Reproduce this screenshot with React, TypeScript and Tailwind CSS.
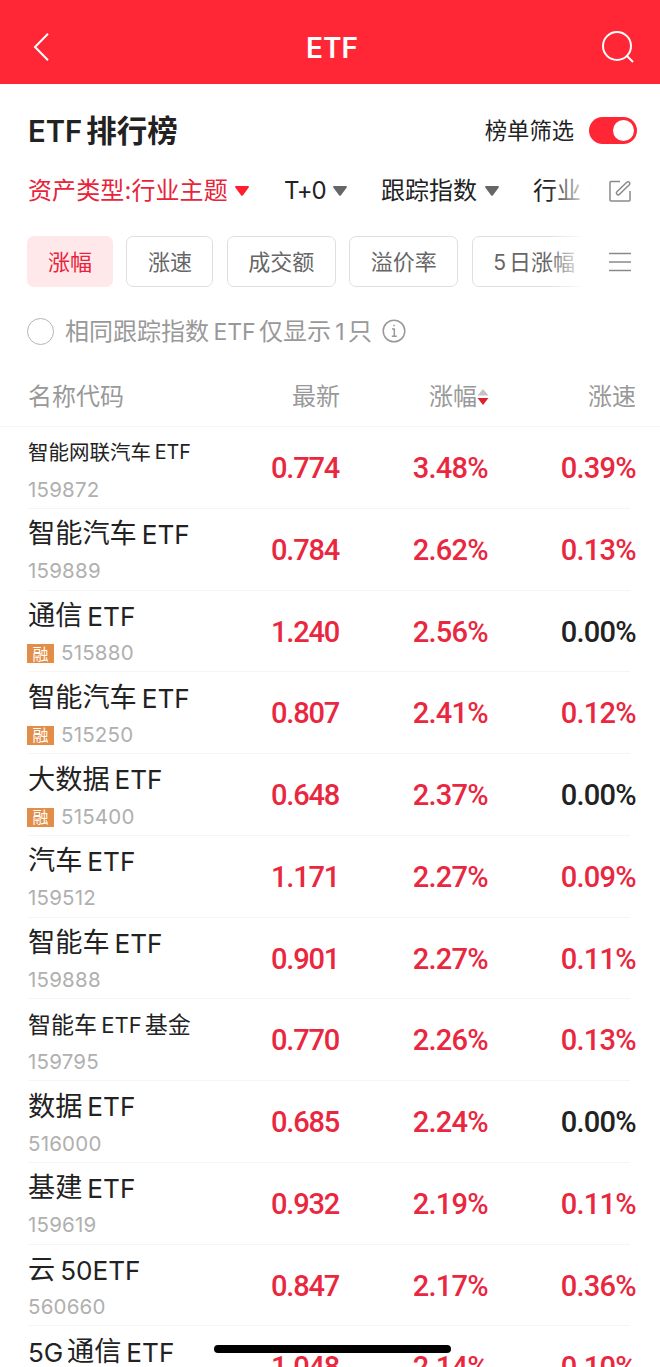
import { clsx } from "clsx";

type Fund = {
  name: string;
  code: string;
  price: string;
  change: string;
  speed: string;
  margin?: boolean;
  size?: "sm" | "md";
};

const funds: Fund[] = [
  { name: "智能网联汽车ETF", code: "159872", price: "0.774", change: "3.48%", speed: "0.39%", size: "sm" },
  { name: "智能汽车ETF", code: "159889", price: "0.784", change: "2.62%", speed: "0.13%" },
  { name: "通信ETF", code: "515880", price: "1.240", change: "2.56%", speed: "0.00%", margin: true },
  { name: "智能汽车ETF", code: "515250", price: "0.807", change: "2.41%", speed: "0.12%", margin: true },
  { name: "大数据ETF", code: "515400", price: "0.648", change: "2.37%", speed: "0.00%", margin: true },
  { name: "汽车ETF", code: "159512", price: "1.171", change: "2.27%", speed: "0.09%" },
  { name: "智能车ETF", code: "159888", price: "0.901", change: "2.27%", speed: "0.11%" },
  { name: "智能车ETF基金", code: "159795", price: "0.770", change: "2.26%", speed: "0.13%", size: "md" },
  { name: "数据ETF", code: "516000", price: "0.685", change: "2.24%", speed: "0.00%" },
  { name: "基建ETF", code: "159619", price: "0.932", change: "2.19%", speed: "0.11%" },
  { name: "云50ETF", code: "560660", price: "0.847", change: "2.17%", speed: "0.36%" },
  { name: "5G通信ETF", code: "", price: "1.048", change: "2.14%", speed: "0.10%" },
];

const tabs = ["涨幅", "涨速", "成交额", "溢价率", "5日涨幅"];

// Latin runs get a small gap where they touch Chinese characters
function MixedText({ text }: { text: string }) {
  const runs = text.match(/[A-Za-z0-9+]+|[^A-Za-z0-9+]+/g) ?? [];
  return (
    <>
      {runs.map((run, i) => {
        const latin = /^[A-Za-z0-9+]/.test(run);
        return (
          <span
            key={i}
            className={clsx(latin && "text-[0.96em]", latin && i > 0 && "ml-[0.19em]", latin && i < runs.length - 1 && "mr-[0.14em]")}
          >
            {run}
          </span>
        );
      })}
    </>
  );
}

function Caret({ className }: { className?: string }) {
  return (
    <svg viewBox="0 0 14 10" className={clsx("h-[10px] w-[14px] shrink-0", className)}>
      <path d="M1 0h12c.9 0 1.2.8.7 1.4L8 9.2c-.6.7-1.4.7-2 0L.3 1.4C-.2.8.1 0 1 0z" fill="currentColor" />
    </svg>
  );
}

function Header() {
  return (
    <header className="flex h-[84px] shrink-0 items-center justify-between bg-[#ff2735] pr-[25px] pl-[33px] pt-[10px] text-white">
      <svg viewBox="0 0 16 28" className="h-7 w-4" fill="none" stroke="currentColor" strokeWidth="2">
        <path d="M15 .8 2 14l13 13.2" />
      </svg>
      <h1 className="pt-[2px] pl-[14px] text-[28px] font-semibold">ETF</h1>
      <svg viewBox="0 0 34 34" className="h-[34px] w-[34px]" fill="none" stroke="currentColor" strokeWidth="2">
        <circle cx="16" cy="16" r="14" />
        <path d="m25.5 25.5 6.5 6.5" />
      </svg>
    </header>
  );
}

function Filters() {
  return (
    <div className="flex h-[62px] shrink-0 items-center justify-between pr-[29px] pl-7 text-[24px] text-[#222]">
      <div className="relative flex w-[568px] items-center overflow-hidden whitespace-nowrap">
        <span className="flex w-[256px] shrink-0 items-center gap-[7px] text-[#e8233a]">
          <span className="tracking-[0.1px]">资产类型:行业主题</span>
          <Caret className="text-[#ff1e2d]" />
        </span>
        <span className="flex w-[97px] shrink-0 items-center gap-[7px]">
          <span className="tracking-[-1px]">T+0</span>
          <Caret className="text-[#666]" />
        </span>
        <span className="flex w-[152px] shrink-0 items-center gap-[8px]">
          跟踪指数
          <Caret className="text-[#666]" />
        </span>
        <span className="flex shrink-0 items-center gap-[8px]">
          行业
          <Caret className="text-[#666]" />
        </span>
        <div className="absolute top-0 right-0 h-full w-[48px] bg-linear-to-r from-white/0 to-white to-90%" />
      </div>
      <svg viewBox="0 0 22 22" className="h-[22px] w-[22px]" fill="none" stroke="#8a8a8a" strokeWidth="1.5">
        <path d="M11 1.500H2A1 1 0 0 0 1 2.500V20a1 1 0 0 0 1 1h18a1 1 0 0 0 1-1v-9" />
        <path d="M17.800 2.300a1.700 1.700 0 0 1 2.500 2.400L10.500 14.200a1.800 1.800 0 0 1-2.600-2.500z" />
      </svg>
    </div>
  );
}

function Tabs() {
  return (
    <div className="flex h-[51px] shrink-0 items-center justify-between pr-[29px] pl-[27px] text-[22px]">
      <div className="relative flex h-[51px] w-[570px] gap-[13.4px] overflow-hidden whitespace-nowrap">
        {tabs.map((tab, i) => (
          <button
            key={tab}
            className={clsx(
              "h-[51px] shrink-0 rounded-[7px] pt-[2px]",
              i === 0 ? "bg-[#ffe8ea] px-[21px] text-[#e8233a]" : "border border-[#dfdfdf] px-[20.5px] text-[#666]"
            )}
          >
            <MixedText text={tab} />
          </button>
        ))}
        <div className="absolute top-0 right-0 h-full w-[48px] bg-linear-to-r from-white/0 to-white to-75%" />
      </div>
      <svg viewBox="0 0 22 20" className="h-5 w-[22px]" stroke="#8a8a8a" strokeWidth="1.5">
        <path d="M0 1.500h22M0 10h22M0 18.500h22" />
      </svg>
    </div>
  );
}

function FundRow({ fund }: { fund: Fund }) {
  return (
    <div className="ml-7 mr-[30px] flex h-[81.75px] shrink-0 border-b border-[#f5f5f5]">
      <div className="flex w-[200px] shrink-0 flex-col pt-px">
        <div
          className={clsx(
            "flex h-[50px] items-center whitespace-nowrap text-[#222]",
            fund.size === "sm" && "text-[20.500px]",
            fund.size === "md" && "text-[23px]",
            !fund.size && "text-[27.2px]"
          )}
        >
          <MixedText text={fund.name} />
        </div>
        <div className="flex h-[24px] items-center text-[20.5px] tracking-[0.2px] text-[#b0b0b0]">
          {fund.margin && (
            <span className="-ml-px mr-[7px] flex h-[19px] w-[27px] items-center justify-center bg-[#e28d48] text-[16px] tracking-normal text-white">
              融
            </span>
          )}
          {fund.code}
        </div>
      </div>
      <div className="-mr-[7px] flex h-full flex-1 items-center pt-[3px] text-right font-['Roboto'] text-[29px] font-medium text-[#e9273f]">
        <span className="w-[111px] tracking-[-1.2px]">{fund.price}</span>
        <span className="w-[149px] tracking-[-0.7px]">{fund.change}</span>
        <span className={clsx("w-[148px] tracking-[-0.7px]", fund.speed === "0.00%" && "text-[#222]")}>{fund.speed}</span>
      </div>
    </div>
  );
}

export default function App() {
  return (
    <div className="relative flex h-[1367px] w-[660px] flex-col overflow-hidden bg-white font-['Inter','Noto_Sans_CJK_SC',sans-serif]">
      <Header />
      <div className="flex h-[76px] shrink-0 items-center justify-between pt-[17px] pr-[23px] pl-7 text-[#222]">
        <h2 className="text-[30.5px] font-semibold">
          <MixedText text="ETF排行榜" />
        </h2>
        <div className="flex items-center gap-[15px] text-[22.3px]">
          <span className="pt-px">榜单筛选</span>
          <div className="flex h-[27px] w-12 items-center justify-end rounded-full bg-[#ff2735] pr-[3px]">
            <div className="h-[21px] w-[21px] rounded-full bg-white" />
          </div>
        </div>
      </div>
      <Filters />
      <div className="h-[14px] shrink-0" />
      <Tabs />
      <div className="flex h-[88px] shrink-0 items-center pl-[27px] text-[24px] text-[#999]">
        <div className="mr-[11px] h-[27px] w-[27px] rounded-full border-[1.5px] border-[#b5b5b5]" />
        <div className="pt-[2px]">
          <MixedText text="相同跟踪指数ETF仅显示1只" />
        </div>
        <svg viewBox="0 0 24 24" className="ml-[10px] h-6 w-6" fill="none" stroke="#999" strokeWidth="1.5">
          <circle cx="12" cy="12" r="10.800" />
          <path d="M10 10h2.300v7M9.800 17.200h5M11.300 6.500h1.500" />
        </svg>
      </div>
      <div className="flex h-[52px] shrink-0 items-start border-b border-[#f5f5f5] pr-6 pl-7 text-[24px] leading-[44px] text-[#999]">
        <span className="w-[200px]">名称代码</span>
        <span className="w-[112px] text-right">最新</span>
        <span className="flex w-[149px] items-center justify-end">
          涨幅
          <svg viewBox="0 0 12 18" className="h-[18px] w-3">
            <path d="M6 1l5.500 6.500H.5z" fill="#c4c4c4" />
            <path d="M6 17L.5 10h11z" fill="#d9232e" />
          </svg>
        </span>
        <span className="flex-1 text-right">涨速</span>
      </div>
      {funds.map((fund, i) => (
        <FundRow key={i} fund={fund} />
      ))}
      {/* home indicator */}
      <div className="absolute top-[1345px] left-[214px] h-[8px] w-[237px] rounded-full bg-black" />
    </div>
  );
}
